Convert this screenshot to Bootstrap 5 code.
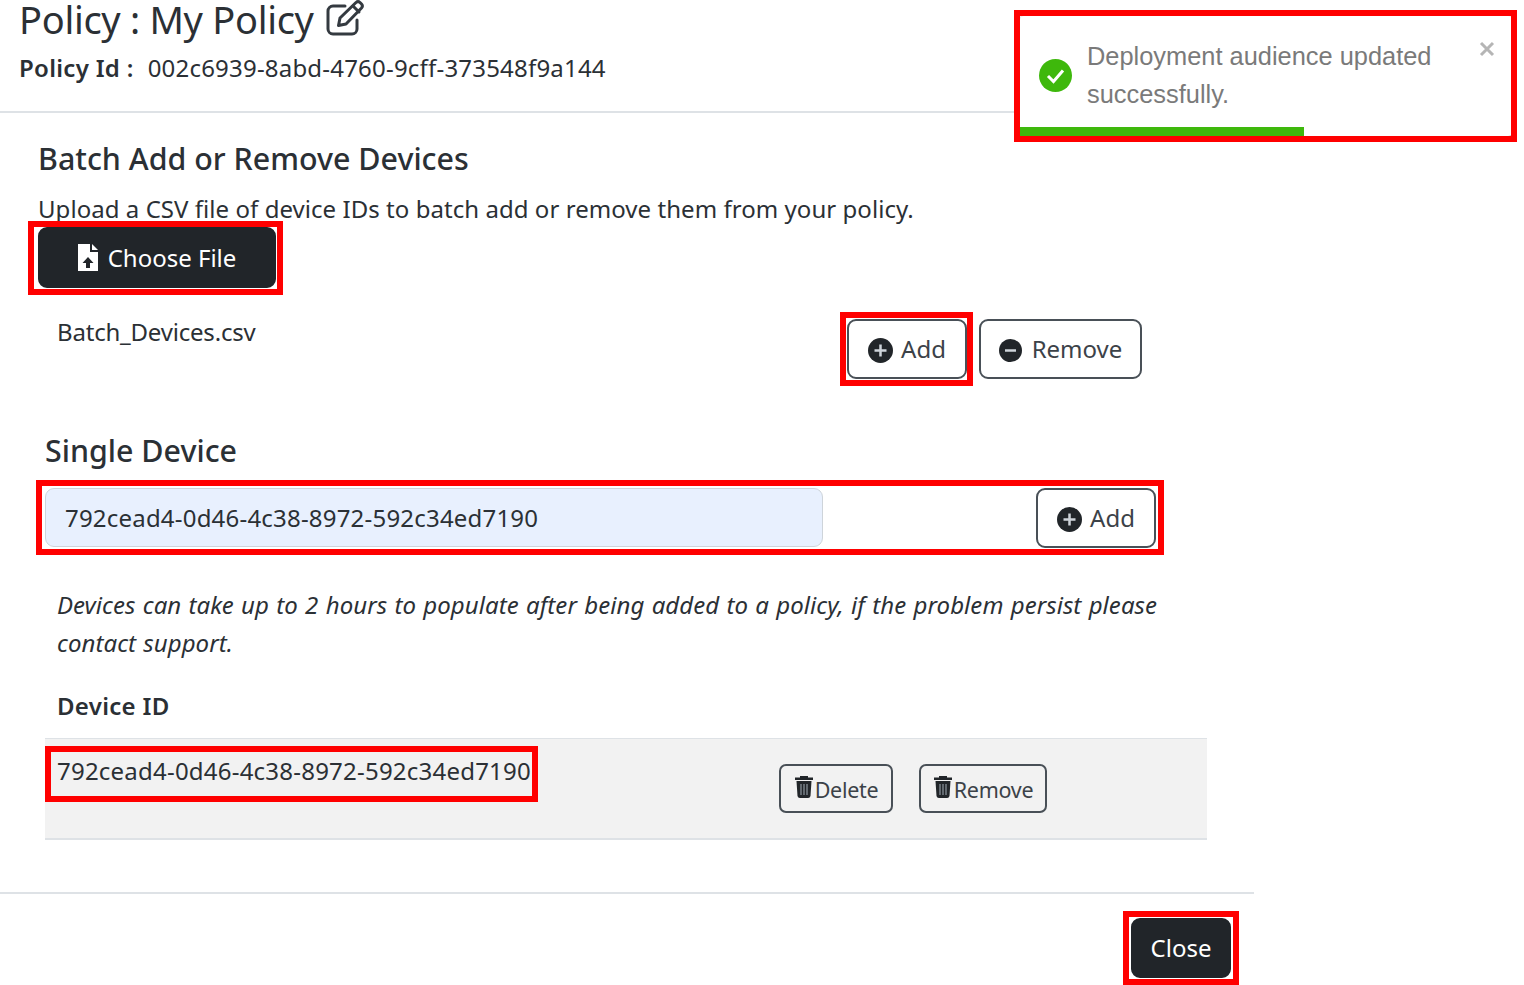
<!DOCTYPE html>
<html lang="en"><head><meta charset="utf-8"><title>Policy</title>
<link href="https://cdn.jsdelivr.net/npm/bootstrap@5.3.0/dist/css/bootstrap.min.css" rel="stylesheet">
<style>
html,body{height:985px;overflow:hidden;background:#fff}
body{font-family:"Noto Sans","Open Sans",sans-serif;font-size:24px;color:#2b3035;position:relative}
.sheet{width:1254px}
.head-area{height:113px;padding:0 19px;border-bottom:2px solid #dee2e6}
.policy-title{font-size:38px;line-height:38px;height:38px;font-weight:400;margin:0 0 11px;letter-spacing:-.3px;gap:12px}
.policy-title svg{width:38px;height:36px}
.policy-id{line-height:38px;font-size:24px;letter-spacing:.2px}
.policy-id b{font-weight:600;margin-right:14px;letter-spacing:.3px}
.body-area{height:779px;padding:28px 47px 0 38px}
.sec-title{font-size:30.4px;line-height:36px;font-weight:500;margin:0}
.sec-sub{line-height:38px;margin:13px 0 0;letter-spacing:.05px}
.hl{position:relative;display:inline-block}
.hl::after{content:"";position:absolute;border:6px solid #f00;pointer-events:none}
.btn-solid,.btn-line{font-size:24px;border-radius:9px;display:inline-flex;align-items:center;justify-content:center;padding:0}
.btn-solid{background:#212529;color:#fff;border:2px solid #212529}
.btn-line{background:#fff;color:#3c4248;border:2px solid #495057}
.pick-wrap{display:block;width:238px;margin-top:-1px}
.pick-wrap::after{inset:-6px -7px -7px -10px}
.pick{width:238px;height:61px;gap:10px}
.file-row{margin-top:31px;height:60px;padding-left:19px}
.file-name{line-height:30px;margin-top:-2px;width:790px;letter-spacing:-.2px}
.add-wrap::after{inset:-7px -6px -7px -7px}
.add-btn{width:120px;height:60px;gap:8px}
.add-btn svg{margin-top:3px}
.single-row .add-btn svg{margin-top:2px}
.rem-btn{width:163px;height:60px;gap:10px;margin-left:12px}
.rem-btn svg{margin-top:3px}
.single-title{margin:54px 0 0 7px}
.single-row{margin:19px 0 0 7px;width:1111px;height:59px}
.single-row::after{inset:-8px -8px -8px -9px}
.id-field.form-control{width:778px;height:59px;background:#e8f0fe;border:1px solid #ced4da;border-radius:9px;font-size:24px;padding:0 19px;color:#2b3035;letter-spacing:.2px}
.note{font-style:italic;line-height:38px;margin:39px 0 0 19px;width:1111px;letter-spacing:.05px;word-spacing:1px}
.dev-head{font-weight:600;margin:25px 0 0 19px;line-height:38px;letter-spacing:.3px}
.dev-row{margin:13px 0 0 7px;width:1162px;height:102px;background:#f2f2f2;border-top:1px solid #dee2e6;border-bottom:2px solid #dee2e6;padding:14px 0 0 12px}
.dev-id{width:722px;line-height:36px}
.dev-id .hl::after{inset:-7px -7px -13px -12px}
.dev-id .hl{white-space:nowrap;letter-spacing:.22px}
.mini{font-size:21.5px;height:49px;margin-top:11px;padding-top:3px;border-radius:7px;letter-spacing:-.3px;align-items:center;background:transparent}
.mini svg{width:20px;height:24px;margin-top:-7px;margin-right:1px}
.mini-del{width:114px;margin-right:26px}
.mini-rem{width:128px}
.foot-area{border-top:2px solid #dee2e6;height:94px;padding:24px 23px 0 0}
.close-wrap::after{inset:-7px -8px -7px -8px}
.close-btn{width:100px;height:60px}
.toast-box{position:absolute;left:1020px;top:16px;width:492px;height:120px;background:#fff;border-radius:4px;box-shadow:0 1px 3px rgba(0,0,0,.45);font-family:"Liberation Sans",Arial,sans-serif;font-size:25.4px;line-height:38px;color:#7a7a7a;padding:21px 60px 0 67px}
.toast-ok{position:absolute;left:19px;top:43px;width:33px;height:33px}
.toast-x{position:absolute;left:458px;top:24px;width:18px;height:18px}
.toast-bar{position:absolute;left:0;bottom:0;height:9px;background:#3eb80c}
.toast-frame{position:absolute;left:1014px;top:10px;width:503px;height:132px;border:6px solid #f00;pointer-events:none}
</style></head><body>
<div class="sheet">
<div class="head-area">
<h1 class="policy-title d-flex align-items-start"><span>Policy : My Policy</span><svg viewBox="0 0 38 36" fill="none" stroke="#343a40" stroke-width="3" stroke-linecap="round" stroke-linejoin="round"><path d="M19 6H7a5 5 0 0 0-5 5v18a5 5 0 0 0 5 5h19a5 5 0 0 0 5-5V20"/><path d="M14 18 30 2.500a3 3 0 0 1 4 0l1.500 1.500a3 3 0 0 1 0 4L20 24l-7.500 1.500z"/><path d="M27 6l6 6"/></svg></h1>
<div class="policy-id"><b>Policy Id :</b>002c6939-8abd-4760-9cff-373548f9a144</div>
</div>
<div class="body-area">
<h5 class="sec-title">Batch Add or Remove Devices</h5>
<p class="sec-sub">Upload a CSV file of device IDs to batch add or remove them from your policy.</p>
<div class="hl pick-wrap"><button class="btn-solid pick"><svg width="20" height="27" viewBox="0 0 20 27"><path fill="#fff" d="M0 0h12v8h8v19H0z"/><path fill="#fff" d="M14 0l6 6h-6z"/><path fill="#212529" d="M10 13l5.500 6H12v5H8v-5H4.500z"/></svg>Choose File</button></div>
<div class="file-row d-flex">
<div class="file-name">Batch_Devices.csv</div>
<div class="hl add-wrap"><button class="btn-line add-btn"><svg width="25" height="25" viewBox="0 0 25 25"><circle cx="12.500" cy="12.500" r="12.500" fill="#212529"/><path d="M12.500 6.500v12M6.500 12.500h12" stroke="#ced4da" stroke-width="2.500"/></svg>Add</button></div>
<button class="btn-line rem-btn"><svg width="23" height="23" viewBox="0 0 23 23"><circle cx="11.500" cy="11.500" r="11.500" fill="#212529"/><path d="M6 11.500h11" stroke="#ced4da" stroke-width="2.500"/></svg>Remove</button>
</div>
<h5 class="sec-title single-title">Single Device</h5>
<div class="hl single-row d-flex justify-content-between">
<input class="form-control id-field" value="792cead4-0d46-4c38-8972-592c34ed7190" aria-label="Device ID">
<button class="btn-line add-btn"><svg width="25" height="25" viewBox="0 0 25 25"><circle cx="12.500" cy="12.500" r="12.500" fill="#212529"/><path d="M12.500 6.500v12M6.500 12.500h12" stroke="#ced4da" stroke-width="2.500"/></svg>Add</button>
</div>
<p class="note">Devices can take up to 2 hours to populate after being added to a policy, if the problem persist please contact support.</p>
<div class="dev-head">Device ID</div>
<div class="dev-row d-flex align-items-start">
<div class="dev-id"><span class="hl">792cead4-0d46-4c38-8972-592c34ed7190</span></div>
<button class="btn-line mini mini-del"><svg viewBox="0 0 20 24"><path fill="#212529" d="M6 2.500V1h8v1.500h5V5H1V2.500zM2.500 6h15l-1 15a2.500 2.500 0 0 1-2.500 2H6a2.500 2.500 0 0 1-2.500-2z"/><path stroke="#868e96" stroke-width="1.300" d="M7 9v11M10 9v11M13 9v11"/></svg>Delete</button>
<button class="btn-line mini mini-rem"><svg viewBox="0 0 20 24"><path fill="#212529" d="M6 2.500V1h8v1.500h5V5H1V2.500zM2.500 6h15l-1 15a2.500 2.500 0 0 1-2.500 2H6a2.500 2.500 0 0 1-2.500-2z"/><path stroke="#868e96" stroke-width="1.300" d="M7 9v11M10 9v11M13 9v11"/></svg>Remove</button>
</div>
</div>
<div class="foot-area d-flex justify-content-end align-items-start">
<div class="hl close-wrap"><button class="btn-solid close-btn">Close</button></div>
</div>
</div>
<div class="toast-box">Deployment audience updated successfully.
<svg class="toast-ok" viewBox="0 0 33 33"><circle cx="16.500" cy="16.500" r="16.500" fill="#3eb80c"/><path d="M9 17l5.500 5.500L24 11.500" fill="none" stroke="#fff" stroke-width="3"/></svg>
<svg class="toast-x" viewBox="0 0 18 18"><path d="M3 3l12 12M15 3L3 15" stroke="#b5b5b5" stroke-width="3"/></svg>
<div class="toast-bar" style="width:284px"></div>
</div>
<div class="toast-frame"></div>
</body></html>
